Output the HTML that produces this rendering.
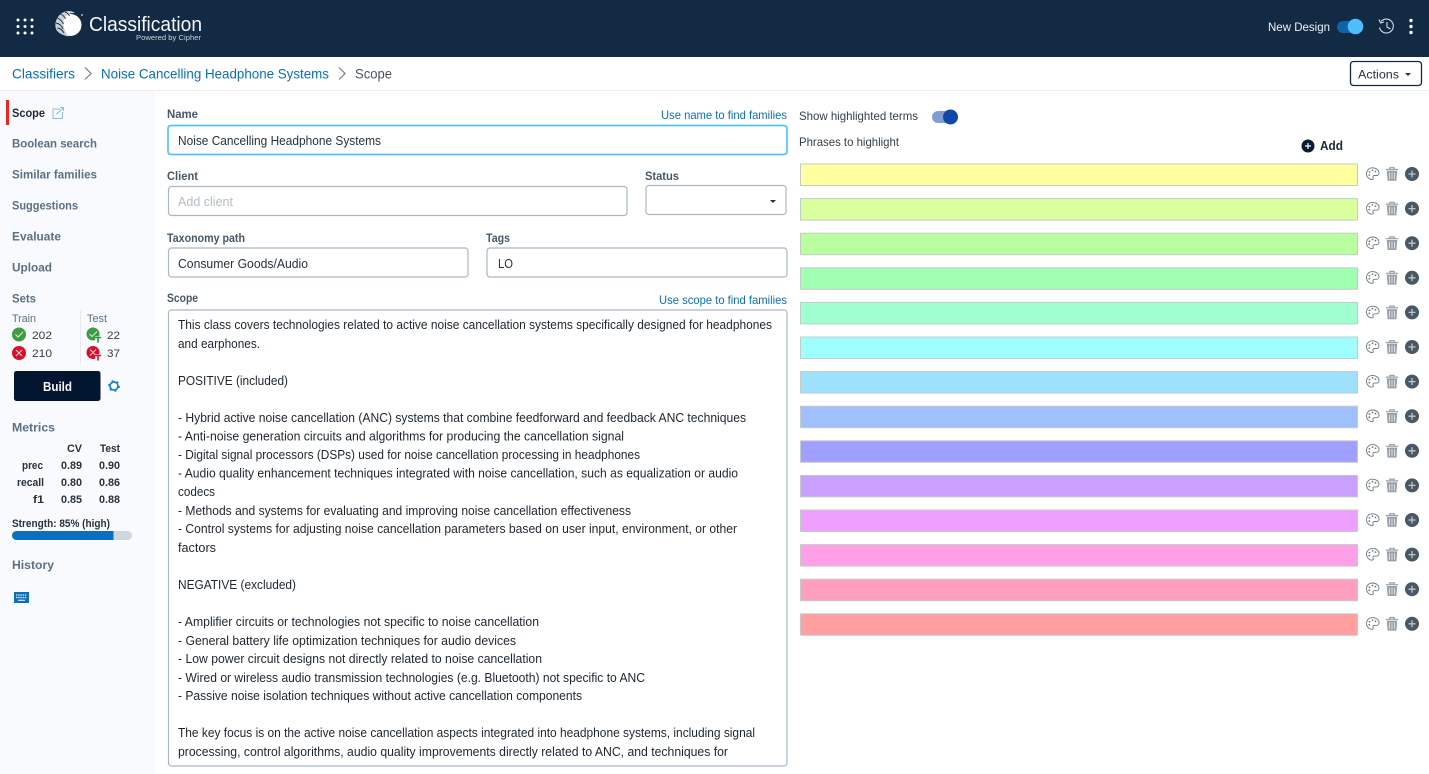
<!DOCTYPE html>
<html><head><meta charset="utf-8"><title>Scope</title>
<style>
html,body{margin:0;padding:0;background:#fff;width:1429px;height:774px;overflow:hidden}
svg{display:block;font-family:"Liberation Sans",sans-serif}
.sc{font-size:12.6px;fill:#1d2630}
.lb{font-size:11.8px;font-weight:700;fill:#47586a}
.nav{font-size:12.4px;font-weight:700;fill:#5b7084}
.lnk{font-size:11.8px;fill:#0b6fb8}
.val{font-size:12.6px;fill:#27323d}
.bc{font-size:14px;fill:#0b6fb8}
.t{font-size:11.3px;fill:#333f4a}
.b{font-size:11px;font-weight:700;fill:#27323d}
</style></head><body>
<svg width="1429" height="774" viewBox="0 0 1429 774" xmlns="http://www.w3.org/2000/svg">
<defs>
<g id="ic">
<path d="M1372.500 167.800c-3.500 0-6 2.700-6 5.900s2.500 5.800 5.500 5.800c1.500 0 1.500-1 1-2s.2-2 1.500-2h2.200c1.300 0 2.300-1 2.300-2.600 0-2.900-2.900-5.100-6.500-5.100z" fill="#fff" stroke="#6d7983" stroke-width=".9"/>
<circle cx="1369.500" cy="172" r=".9" fill="#6d7983"/><circle cx="1372.500" cy="170.300" r=".9" fill="#6d7983"/><circle cx="1375.500" cy="171.500" r=".9" fill="#6d7983"/><circle cx="1369.300" cy="175" r=".9" fill="#6d7983"/>
<path d="M1385.800 169.500h12.400M1389.800 169.500v-1.800h4.400v1.800" fill="none" stroke="#98a1a8" stroke-width="1.200"/>
<path d="M1386.800 170.800h10.400l-.8 10h-8.800z" fill="#98a1a8"/>
<path d="M1389.500 172.500v6.800M1392 172.500v6.800M1394.500 172.500v6.800" stroke="#eceef0" stroke-width=".8"/>
<circle cx="1412" cy="174" r="7" fill="#4a5863"/>
<path d="M1408.500 174h7M1412 170.500v7" stroke="#bfc7cd" stroke-width="1.300"/>
</g>
</defs>

<!-- header -->
<rect width="1429" height="57" fill="#132a44"/>
<g fill="#fff"><circle cx="18" cy="20" r="1.500"/><circle cx="25" cy="20" r="1.500"/><circle cx="32" cy="20" r="1.500"/><circle cx="18" cy="26.500" r="1.500"/><circle cx="25" cy="26.500" r="1.500"/><circle cx="32" cy="26.500" r="1.500"/><circle cx="18" cy="33" r="1.500"/><circle cx="25" cy="33" r="1.500"/><circle cx="32" cy="33" r="1.500"/></g>
<!-- logo -->
<circle cx="70.500" cy="25" r="11" fill="#fff"/>
<path d="M55.500 27c-.8-8 4.500-15.500 13-16 2.500 0 5 .6 6.500 2-6-.5-11 3-11.500 9-.3 5 1.500 10 5 14.500-7-1.500-12.500-4.500-13-9.500z" fill="#c9d0d6"/>
<path d="M57 18c3 1 5 3 6.500 6M56 23c3 .5 5.500 2.500 7 6M57.500 28c2.500.5 5 2 6.500 5M60.500 14c2.500 1 4 2.500 5 5M65 12c2 .7 3.500 2 4.500 4" fill="none" stroke="#132a44" stroke-width=".9"/>
<circle cx="82" cy="15" r="1" fill="#aab4bd"/>
<text x="89" y="31" font-size="20" font-weight="400" fill="#f4f6f8" textLength="113" lengthAdjust="spacingAndGlyphs">Classification</text>
<text x="136" y="40" font-size="7.500" fill="#cdd4da" textLength="65" lengthAdjust="spacingAndGlyphs">Powered by Cipher</text>
<text x="1268" y="31" font-size="12.200" fill="#eef1f4" textLength="62" lengthAdjust="spacingAndGlyphs">New Design</text>
<rect x="1337" y="21" width="26" height="12" rx="6" fill="#0e64a6"/>
<circle cx="1355.500" cy="26.500" r="7.800" fill="#4dbdfb"/>
<path d="M1381 21.500a7 7 0 1 1-1.500 6M1379 19.500l1.500 3.500 3.500-1M1387 22v5l3.500 2" fill="none" stroke="#d6dbe0" stroke-width="1.100"/>
<circle cx="1411" cy="20.500" r="1.700" fill="#f2f4f6"/><circle cx="1411" cy="26.500" r="1.700" fill="#f2f4f6"/><circle cx="1411" cy="32.500" r="1.700" fill="#f2f4f6"/>

<!-- breadcrumb -->
<rect y="90" width="1429" height="1" fill="#eceff2"/>
<text class="bc" x="12" y="78.500" textLength="63" lengthAdjust="spacingAndGlyphs">Classifiers</text>
<path d="M85 67.500l6 6-6 6" fill="none" stroke="#6d7882" stroke-width="1.100"/>
<text class="bc" x="101" y="78.500" textLength="228" lengthAdjust="spacingAndGlyphs">Noise Cancelling Headphone Systems</text>
<path d="M339 67.500l6 6-6 6" fill="none" stroke="#6d7882" stroke-width="1.100"/>
<text class="bc" x="355" y="78.500" style="fill:#4a545d" textLength="37" lengthAdjust="spacingAndGlyphs">Scope</text>
<rect x="1350.500" y="61.500" width="71" height="24" rx="3" fill="#fff" stroke="#132a44" stroke-width="1.300"/>
<text x="1358" y="78.500" font-size="12.400" fill="#27323d" textLength="41" lengthAdjust="spacingAndGlyphs">Actions</text>
<path d="M1405 73h6l-3 3z" fill="#27323d"/>

<!-- sidebar -->
<rect y="91" width="155" height="683" fill="#f8fafd"/>
<rect x="6" y="100" width="3" height="25" fill="#f3231f"/>
<text x="12" y="117" font-size="12.400" font-weight="700" fill="#1e2a36" textLength="33" lengthAdjust="spacingAndGlyphs">Scope</text>
<path d="M60 109h-7v9.500h9.500v-6.500M56.500 114.500l6.500-6.500M60 107.500h3.500v3.500" fill="none" stroke="#8dbce0" stroke-width="1"/>
<text class="nav" x="12" y="147.500" textLength="85" lengthAdjust="spacingAndGlyphs">Boolean search</text>
<text class="nav" x="12" y="178.500" textLength="85" lengthAdjust="spacingAndGlyphs">Similar families</text>
<text class="nav" x="12" y="209.500" textLength="66" lengthAdjust="spacingAndGlyphs">Suggestions</text>
<text class="nav" x="12" y="240.500" textLength="49" lengthAdjust="spacingAndGlyphs">Evaluate</text>
<text class="nav" x="12" y="271.500" textLength="40" lengthAdjust="spacingAndGlyphs">Upload</text>
<text class="nav" x="12" y="302.500" textLength="24" lengthAdjust="spacingAndGlyphs">Sets</text>
<text x="12" y="322" font-size="11" fill="#5b7084" textLength="24" lengthAdjust="spacingAndGlyphs">Train</text>
<text x="87" y="322" font-size="11" fill="#5b7084" textLength="20" lengthAdjust="spacingAndGlyphs">Test</text>
<rect x="80" y="310" width="1" height="54" fill="#e6eaee"/>
<circle cx="19" cy="334.500" r="7" fill="#3f9c41"/><path d="M15.500 334.500l2.500 2.500 5-5" fill="none" stroke="#d8ecd8" stroke-width="1"/>
<circle cx="19" cy="353" r="7" fill="#d9102a"/><path d="M16 350l6 6M22 350l-6 6" stroke="#f7d5d9" stroke-width="1"/>
<text class="t" x="32" y="339" textLength="20" lengthAdjust="spacingAndGlyphs">202</text>
<text class="t" x="32" y="357" textLength="20" lengthAdjust="spacingAndGlyphs">210</text>
<circle cx="93" cy="334" r="6.500" fill="#3f9c41"/><path d="M89.500 334l2.500 2.500 5-5" fill="none" stroke="#d8ecd8" stroke-width="1"/>
<path d="M95 338h6M98 338v5" stroke="#f8fafd" stroke-width="3.600"/>
<path d="M95 337.500h6M98 337.500v5" stroke="#1f9a3a" stroke-width="1.600"/>
<circle cx="93" cy="352.500" r="6.500" fill="#d9102a"/><path d="M90 349.500l6 6M96 349.500l-6 6" stroke="#f7d5d9" stroke-width="1"/>
<path d="M95 356h6M98 356v5" stroke="#f8fafd" stroke-width="3.600"/>
<path d="M95 355.500h6M98 355.500v5" stroke="#d9102a" stroke-width="1.600"/>
<text class="t" x="107" y="339" textLength="13" lengthAdjust="spacingAndGlyphs">22</text>
<text class="t" x="107" y="357" textLength="13" lengthAdjust="spacingAndGlyphs">37</text>
<rect x="14" y="371" width="86.500" height="30" rx="2.500" fill="#031630"/>
<text x="43" y="391" font-size="12.500" font-weight="700" fill="#f4f6f8" textLength="29" lengthAdjust="spacingAndGlyphs">Build</text>
<circle cx="114" cy="386" r="4" fill="none" stroke="#1a80cf" stroke-width="1.700"/>
<circle cx="114" cy="386" r="5.200" fill="none" stroke="#1a80cf" stroke-width="1.400" stroke-dasharray="2 3.450"/>
<text class="nav" x="12" y="431.500" textLength="43" lengthAdjust="spacingAndGlyphs">Metrics</text>
<text class="b" x="67" y="452" textLength="15" lengthAdjust="spacingAndGlyphs">CV</text>
<text class="b" x="100" y="452" textLength="20" lengthAdjust="spacingAndGlyphs">Test</text>
<text class="b" x="22" y="469" textLength="21" lengthAdjust="spacingAndGlyphs">prec</text>
<text class="b" x="17" y="486" textLength="27" lengthAdjust="spacingAndGlyphs">recall</text>
<text class="b" x="33" y="503" textLength="11" lengthAdjust="spacingAndGlyphs">f1</text>
<text class="b" x="61" y="469" textLength="21" lengthAdjust="spacingAndGlyphs">0.89</text><text class="b" x="99" y="469" textLength="21" lengthAdjust="spacingAndGlyphs">0.90</text>
<text class="b" x="61" y="486" textLength="21" lengthAdjust="spacingAndGlyphs">0.80</text><text class="b" x="99" y="486" textLength="21" lengthAdjust="spacingAndGlyphs">0.86</text>
<text class="b" x="61" y="503" textLength="21" lengthAdjust="spacingAndGlyphs">0.85</text><text class="b" x="99" y="503" textLength="21" lengthAdjust="spacingAndGlyphs">0.88</text>
<text class="b" x="12" y="527" textLength="98" lengthAdjust="spacingAndGlyphs">Strength: 85% (high)</text>
<rect x="12" y="531" width="120" height="9" rx="4.500" fill="#cfd8df"/>
<path d="M16.500 531H113.500v9H16.500a4.500 4.500 0 0 1 0-9z" fill="#0b6fbd"/>
<text class="nav" x="12" y="569" textLength="42" lengthAdjust="spacingAndGlyphs">History</text>
<rect x="14" y="592" width="15" height="11" fill="#0b6fbd"/>
<path d="M16 595h11M16 597.500h11" stroke="#d8e9f6" stroke-width="1.200" stroke-dasharray="1.500 .7"/><path d="M18 600.300h7" stroke="#d8e9f6" stroke-width="1.200"/>

<!-- form -->
<text class="lb" x="167" y="118" textLength="31" lengthAdjust="spacingAndGlyphs">Name</text>
<text class="lnk" x="661" y="119" textLength="126" lengthAdjust="spacingAndGlyphs">Use name to find families</text>
<rect x="168" y="125.500" width="619" height="29" rx="3" fill="#fff" stroke="#54c1fb" stroke-width="1.700"/>
<text class="val" x="178" y="145" textLength="203" lengthAdjust="spacingAndGlyphs">Noise Cancelling Headphone Systems</text>

<text class="lb" x="167" y="180" textLength="31" lengthAdjust="spacingAndGlyphs">Client</text>
<rect x="168.500" y="186.500" width="458.500" height="29" rx="3" fill="#fff" stroke="#a9b6c4" stroke-width="1.200"/>
<text class="val" x="178" y="206" style="fill:#b3bcc5" textLength="55" lengthAdjust="spacingAndGlyphs">Add client</text>
<text class="lb" x="645" y="180" textLength="34" lengthAdjust="spacingAndGlyphs">Status</text>
<rect x="646" y="185.500" width="140" height="29" rx="3" fill="#fff" stroke="#a9b6c4" stroke-width="1.200"/>
<path d="M770 200h6l-3 3z" fill="#27323d"/>

<text class="lb" x="167" y="242" textLength="78" lengthAdjust="spacingAndGlyphs">Taxonomy path</text>
<rect x="168.500" y="248" width="299.500" height="29" rx="3" fill="#fff" stroke="#a9b6c4" stroke-width="1.200"/>
<text class="val" x="178" y="268" textLength="130" lengthAdjust="spacingAndGlyphs">Consumer Goods/Audio</text>
<text class="lb" x="486" y="242" textLength="24" lengthAdjust="spacingAndGlyphs">Tags</text>
<rect x="487" y="248" width="300" height="29" rx="3" fill="#fff" stroke="#a9b6c4" stroke-width="1.200"/>
<text class="val" x="498" y="268" textLength="15" lengthAdjust="spacingAndGlyphs">LO</text>

<text class="lb" x="167" y="302" textLength="31" lengthAdjust="spacingAndGlyphs">Scope</text>
<text class="lnk" x="659" y="304" textLength="128" lengthAdjust="spacingAndGlyphs">Use scope to find families</text>
<rect x="168.500" y="310" width="618.500" height="456" rx="3" fill="#fff" stroke="#a9b6c4" stroke-width="1.200"/>

<g class="sc">
<text class="sc" x="178" y="329" textLength="594" lengthAdjust="spacingAndGlyphs">This class covers technologies related to active noise cancellation systems specifically designed for headphones</text>
<text class="sc" x="178" y="348" textLength="82" lengthAdjust="spacingAndGlyphs">and earphones.</text>
<text class="sc" x="178" y="385" textLength="110" lengthAdjust="spacingAndGlyphs">POSITIVE (included)</text>
<text class="sc" x="178" y="422" textLength="568" lengthAdjust="spacingAndGlyphs">- Hybrid active noise cancellation (ANC) systems that combine feedforward and feedback ANC techniques</text>
<text class="sc" x="178" y="440.500" textLength="446" lengthAdjust="spacingAndGlyphs">- Anti-noise generation circuits and algorithms for producing the cancellation signal</text>
<text class="sc" x="178" y="459" textLength="462" lengthAdjust="spacingAndGlyphs">- Digital signal processors (DSPs) used for noise cancellation processing in headphones</text>
<text class="sc" x="178" y="477.500" textLength="560" lengthAdjust="spacingAndGlyphs">- Audio quality enhancement techniques integrated with noise cancellation, such as equalization or audio</text>
<text class="sc" x="178" y="496" textLength="37" lengthAdjust="spacingAndGlyphs">codecs</text>
<text class="sc" x="178" y="515" textLength="453" lengthAdjust="spacingAndGlyphs">- Methods and systems for evaluating and improving noise cancellation effectiveness</text>
<text class="sc" x="178" y="533" textLength="559" lengthAdjust="spacingAndGlyphs">- Control systems for adjusting noise cancellation parameters based on user input, environment, or other</text>
<text class="sc" x="178" y="552" textLength="38" lengthAdjust="spacingAndGlyphs">factors</text>
<text class="sc" x="178" y="589" textLength="118" lengthAdjust="spacingAndGlyphs">NEGATIVE (excluded)</text>
<text class="sc" x="178" y="626" textLength="361" lengthAdjust="spacingAndGlyphs">- Amplifier circuits or technologies not specific to noise cancellation</text>
<text class="sc" x="178" y="645" textLength="338" lengthAdjust="spacingAndGlyphs">- General battery life optimization techniques for audio devices</text>
<text class="sc" x="178" y="663" textLength="364" lengthAdjust="spacingAndGlyphs">- Low power circuit designs not directly related to noise cancellation</text>
<text class="sc" x="178" y="682" textLength="467" lengthAdjust="spacingAndGlyphs">- Wired or wireless audio transmission technologies (e.g. Bluetooth) not specific to ANC</text>
<text class="sc" x="178" y="700" textLength="404" lengthAdjust="spacingAndGlyphs">- Passive noise isolation techniques without active cancellation components</text>
<text class="sc" x="178" y="737" textLength="577" lengthAdjust="spacingAndGlyphs">The key focus is on the active noise cancellation aspects integrated into headphone systems, including signal</text>
<text class="sc" x="178" y="756" textLength="550" lengthAdjust="spacingAndGlyphs">processing, control algorithms, audio quality improvements directly related to ANC, and techniques for</text>
</g>

<!-- right column -->
<text x="799" y="120" font-size="12" fill="#333f4a" textLength="119" lengthAdjust="spacingAndGlyphs">Show highlighted terms</text>
<rect x="932" y="111" width="24" height="12" rx="6" fill="#7f9fd4"/>
<circle cx="950.500" cy="117" r="7.500" fill="#0f48a8"/>
<text x="799" y="146" font-size="12" fill="#333f4a" textLength="100" lengthAdjust="spacingAndGlyphs">Phrases to highlight</text>
<circle cx="1308" cy="146" r="6.500" fill="#0c1d33"/>
<path d="M1305 146h6M1308 143v6" stroke="#fff" stroke-width="1.200"/>
<text x="1320" y="150" font-size="12.500" font-weight="700" fill="#1a2a3c" textLength="23" lengthAdjust="spacingAndGlyphs">Add</text>

<g stroke="#c3ccc9" stroke-width="1">
<rect x="800.500" y="164" width="557" height="21.500" fill="#ffff9f"/>
<rect x="800.500" y="198.600" width="557" height="21.500" fill="#d9ff9f"/>
<rect x="800.500" y="233.200" width="557" height="21.500" fill="#b9ff9f"/>
<rect x="800.500" y="267.800" width="557" height="21.500" fill="#a0ffb0"/>
<rect x="800.500" y="302.400" width="557" height="21.500" fill="#9fffd0"/>
<rect x="800.500" y="337" width="557" height="21.500" fill="#9fffff"/>
<rect x="800.500" y="371.600" width="557" height="21.500" fill="#9fdfff"/>
<rect x="800.500" y="406.200" width="557" height="21.500" fill="#9fbfff"/>
<rect x="800.500" y="440.800" width="557" height="21.500" fill="#9f9fff"/>
<rect x="800.500" y="475.400" width="557" height="21.500" fill="#c99fff"/>
<rect x="800.500" y="510" width="557" height="21.500" fill="#ef9fff"/>
<rect x="800.500" y="544.600" width="557" height="21.500" fill="#ff9fe7"/>
<rect x="800.500" y="579.200" width="557" height="21.500" fill="#ff9fbf"/>
<rect x="800.500" y="613.800" width="557" height="21.500" fill="#ff9f9f"/>
</g>
<use href="#ic"/>
<use href="#ic" y="34.600"/>
<use href="#ic" y="69.200"/>
<use href="#ic" y="103.800"/>
<use href="#ic" y="138.400"/>
<use href="#ic" y="173"/>
<use href="#ic" y="207.600"/>
<use href="#ic" y="242.200"/>
<use href="#ic" y="276.800"/>
<use href="#ic" y="311.400"/>
<use href="#ic" y="346"/>
<use href="#ic" y="380.600"/>
<use href="#ic" y="415.200"/>
<use href="#ic" y="449.800"/>
</svg>
</body></html>
